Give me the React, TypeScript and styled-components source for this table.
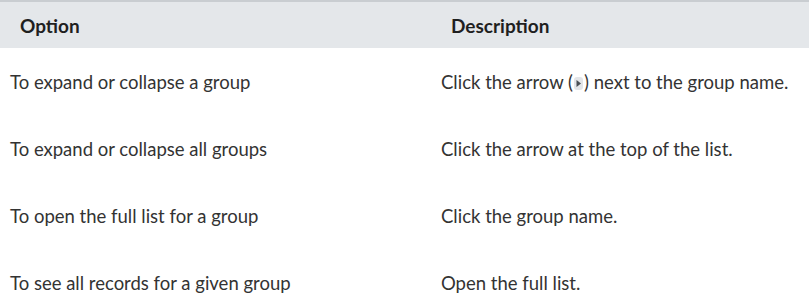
import styled, { createGlobalStyle } from "styled-components";

const GlobalStyle = createGlobalStyle`
  html, body {
    margin: 0;
    padding: 0;
    background: #ffffff;
  }
  body {
    font-family: "Lato", "Noto Sans", sans-serif;
    color: #333333;
  }
`;

const Table = styled.div`
  width: 809px;
  display: flex;
  flex-direction: column;
`;

// both rows put their second column 431px after their own left padding
const HeaderRow = styled.div`
  display: grid;
  grid-template-columns: 431px 1fr;
  align-items: center;
  height: 46px;
  padding-left: 20px;
  background: #e4e7ea;
  border-top: 2px solid #c9cdd1;
`;

const HeaderCell = styled.div`
  font-size: 19px;
  font-weight: 700;
  color: #1f1f1f;
`;

const Row = styled.div`
  display: grid;
  grid-template-columns: 431px 1fr;
  align-items: center;
  height: 67px;
  padding-left: 10px;
`;

const Cell = styled.div`
  font-size: 18.5px;
  color: #333333;
  white-space: nowrap;
`;

const ArrowSvg = styled.svg`
  vertical-align: -1px;
  margin: 0 1px;
`;

const ArrowIcon = () => (
  <ArrowSvg width="9" height="13" viewBox="0 0 9 13">
    <rect x="0" y="0" width="9" height="13" rx="3" fill="#e3e5e8" />
    <path d="M2.5 3 L7 6.5 L2.5 10 Z" fill="#4a4f55" />
  </ArrowSvg>
);

const rows: { option: string; desc: React.ReactNode }[] = [
  {
    option: "To expand or collapse a group",
    desc: (
      <>
        Click the arrow (<ArrowIcon />) next to the group name.
      </>
    ),
  },
  { option: "To expand or collapse all groups", desc: "Click the arrow at the top of the list." },
  { option: "To open the full list for a group", desc: "Click the group name." },
  { option: "To see all records for a given group", desc: "Open the full list." },
];

export default function App() {
  return (
    <>
      <GlobalStyle />
      <Table>
        <HeaderRow>
          <HeaderCell>Option</HeaderCell>
          <HeaderCell>Description</HeaderCell>
        </HeaderRow>
        {rows.map((r) => (
          <Row key={r.option}>
            <Cell>{r.option}</Cell>
            <Cell>{r.desc}</Cell>
          </Row>
        ))}
      </Table>
    </>
  );
}
